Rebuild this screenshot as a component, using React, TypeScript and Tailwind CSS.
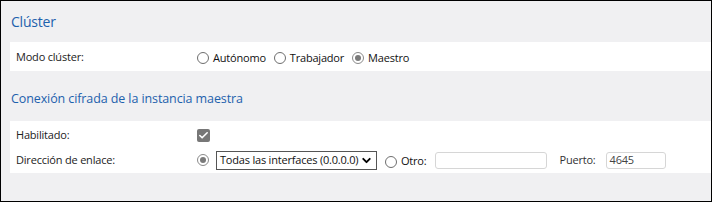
import { Check, ChevronDown } from 'lucide-react'

function Radio({ checked = false }: { checked?: boolean }) {
  return (
    <span
      className={
        checked
          ? 'flex h-[12px] w-[12px] shrink-0 items-center justify-center rounded-full border border-[#8a8a8a] bg-white'
          : 'flex h-[12px] w-[12px] shrink-0 items-center justify-center rounded-full border border-[#6e6e6e] bg-white'
      }
    >
      {checked && <span className="h-[6px] w-[6px] rounded-full bg-[#7a7a7a]" />}
    </span>
  )
}

function RadioOption({ label, checked = false }: { label: string; checked?: boolean }) {
  return (
    <label className="flex items-center gap-[4px] text-[#111]">
      <Radio checked={checked} />
      <span>{label}</span>
    </label>
  )
}

export default function App() {
  return (
    <div
      className="h-[202px] w-[712px] border border-black bg-[#f0f0f2] pl-[9px] text-[11px] tracking-[-0.2px] text-[#222]"
      style={{ fontFamily: '"Open Sans", "Noto Sans", Arial, sans-serif' }}
    >
      <h2 className="flex h-[41px] items-center pl-[1px] text-[14px] tracking-[-0.2px] text-[#1d61ad]">
        Clúster
      </h2>

      <div className="flex h-[29px] items-center bg-white pl-[6px]">
        <span className="w-[181px] shrink-0 pt-[1px]">Modo clúster:</span>
        <div className="flex items-center gap-[8px] pt-[3px]">
          <RadioOption label="Autónomo" />
          <RadioOption label="Trabajador" />
          <RadioOption label="Maestro" checked />
        </div>
      </div>

      <h2 className="flex h-[50px] items-center pl-[1px] pt-[6px] text-[12.5px] tracking-[-0.1px] text-[#1d61ad]">
        Conexión cifrada de la instancia maestra
      </h2>

      <div className="flex h-[52px] flex-col bg-white pl-[6px] pt-[4px]">
        <div className="flex h-[20px] items-center">
          <span className="w-[181px] shrink-0">Habilitado:</span>
          <span className="flex h-[13px] w-[13px] items-center justify-center rounded-[2px] bg-[#777]">
            <Check className="h-[11px] w-[11px] text-white" strokeWidth={3.5} />
          </span>
        </div>
        <div className="mt-[4px] flex h-[22px] items-center">
          <span className="w-[181px] shrink-0">Dirección de enlace:</span>
          <Radio checked />
          <div className="ml-[7px] flex h-[19px] w-[161px] items-center justify-between whitespace-nowrap border border-[#555] bg-white pl-[3px] pr-[3px] text-[#111]">
            <span>Todas las interfaces (0.0.0.0)</span>
            <ChevronDown className="h-[13px] w-[13px] text-black" strokeWidth={3.5} />
          </div>
          <div className="ml-[8px] flex items-center gap-[4px] pt-[3px] text-[#111]">
            <Radio />
            <span>Otro:</span>
          </div>
          <div className="ml-[9px] h-[17px] w-[112px] rounded-[3px] border border-[#d6d6d6] bg-white" />
          <span className="ml-[12px] text-[#333]">Puerto:</span>
          <div className="ml-[10px] flex h-[17px] w-[60px] items-center rounded-[3px] border border-[#d6d6d6] bg-white pl-[3px] text-[#444]">
            4645
          </div>
        </div>
      </div>
    </div>
  )
}
